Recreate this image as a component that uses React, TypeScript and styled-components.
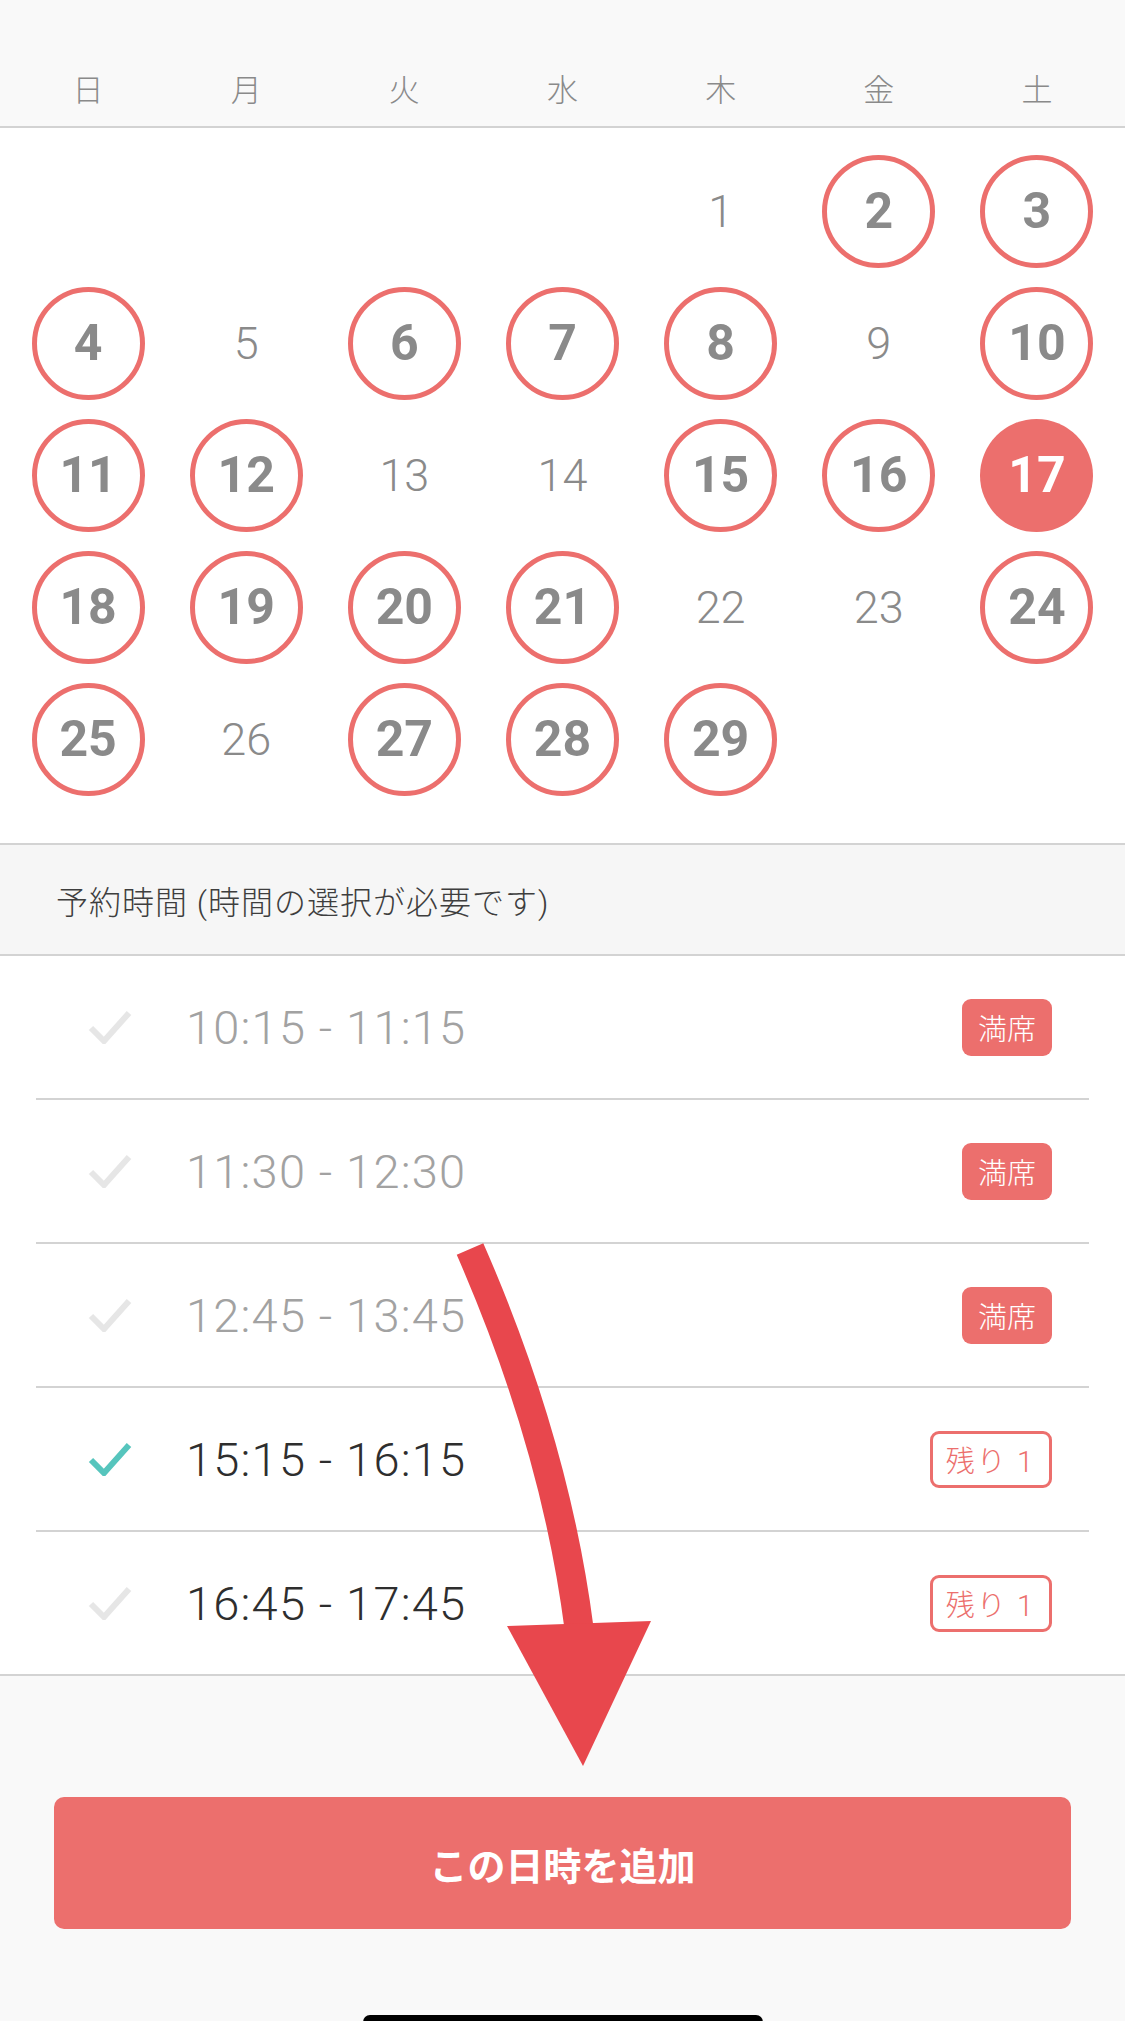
import React from "react";
import styled, { createGlobalStyle, css } from "styled-components";

const GlobalStyle = createGlobalStyle`
  html, body { margin: 0; padding: 0; background: #f9f9f9; }
  body { font-family: Roboto, "Noto Sans CJK JP", sans-serif; overflow-x: hidden; }
  * { box-sizing: border-box; }
`;

const CORAL = "#ec6f6d";
const CJK = `Roboto, "Noto Sans CJK JP", sans-serif`;

const Page = styled.div`
  position: relative;
  width: 1125px;
  min-height: 2021px;
  background: #f9f9f9;
  overflow: hidden;
`;

const WeekHeader = styled.div`
  height: 128px;
  display: grid;
  grid-template-columns: repeat(7, 1fr);
  align-items: end;
  padding: 0 9px 20px;
  background: #f9f9f9;
  border-bottom: 2px solid #d3d3d3;
`;

const WeekDay = styled.div`
  text-align: center;
  font-family: ${CJK};
  font-size: 31px;
  line-height: 31px;
  font-weight: 300;
  color: #8a8a8a;
`;

const CalendarGrid = styled.div`
  display: grid;
  grid-template-columns: repeat(7, 1fr);
  grid-auto-rows: 132px;
  padding: 17px 9px 38px;
  background: #fff;
  border-bottom: 2px solid #d3d3d3;
`;

const DayCell = styled.div`
  display: flex;
  align-items: center;
  justify-content: center;
`;

const DayMark = styled.div<{ $state: "none" | "open" | "selected" }>`
  width: 113px;
  height: 113px;
  border-radius: 50%;
  display: flex;
  align-items: center;
  justify-content: center;
  font-family: Roboto, sans-serif;
  color: #8a8a8a;
  ${(p) =>
    p.$state === "none"
      ? css`
          font-size: 45px;
          font-weight: 300;
        `
      : p.$state === "open"
      ? css`
          font-size: 50px;
          font-weight: 700;
          border: 5px solid ${CORAL};
        `
      : css`
          font-size: 50px;
          font-weight: 700;
          background: ${CORAL};
          color: #fff;
        `}
`;

const SectionBand = styled.div`
  height: 111px;
  display: flex;
  align-items: center;
  padding-left: 56px;
  background: #f6f6f6;
  border-bottom: 2px solid #d3d3d3;
  font-family: ${CJK};
  font-size: 32px;
  font-weight: 300;
  letter-spacing: 1px;
  color: #3e3e3e;
`;

const TimeList = styled.div`
  background: #fff;
  border-bottom: 2px solid #d3d3d3;
`;

const TimeRow = styled.div<{ $last: boolean }>`
  height: ${(p) => (p.$last ? 142 : 144)}px;
  margin: 0 36px;
  display: flex;
  align-items: center;
  padding: 0 37px 0 52px;
  border-bottom: ${(p) => (p.$last ? "none" : "2px solid #d3d3d3")};
`;

const CheckBox = styled.div`
  width: 44px;
  height: 34px;
  display: flex;
  align-items: center;
`;

const TimeText = styled.div<{ $full: boolean }>`
  margin-left: 54px;
  flex: 1;
  font-family: Roboto, sans-serif;
  font-weight: 300;
  font-size: 47px;
  letter-spacing: 1.2px;
  color: ${(p) => (p.$full ? "#a2a2a2" : "#2e2e2e")};
`;

const Badge = styled.div<{ $full: boolean }>`
  height: 57px;
  display: flex;
  align-items: center;
  justify-content: center;
  border-radius: 9px;
  font-family: ${CJK};
  font-size: 29px;
  font-weight: 300;
  ${(p) =>
    p.$full
      ? css`
          padding: 0 16px;
          background: ${CORAL};
          color: #fff;
        `
      : css`
          padding: 0 14px 0 13px;
          border: 3px solid ${CORAL};
          color: ${CORAL};
          letter-spacing: 2px;
        `}
`;

const Footer = styled.div`
  padding: 121px 54px 0;
  display: flex;
  flex-direction: column;
  align-items: center;
  background: #f9f9f9;
`;

const AddButton = styled.button`
  width: 100%;
  height: 132px;
  border: none;
  border-radius: 10px;
  background: ${CORAL};
  color: #fff;
  font-family: ${CJK};
  font-weight: 700;
  font-size: 38px;
`;

const HomeIndicator = styled.div`
  margin-top: 86px;
  width: 400px;
  height: 14px;
  border-radius: 7px;
  background: #000;
`;

const Overlay = styled.svg`
  position: absolute;
  top: 0;
  left: 0;
  pointer-events: none;
`;

const weekDays = ["日", "月", "火", "水", "木", "金", "土"];

type DayState = "none" | "open" | "selected";
const noneDays = new Set([1, 5, 9, 13, 14, 22, 23, 26]);
const days: (null | { n: number; s: DayState })[] = [
  null,
  null,
  null,
  null,
  ...Array.from({ length: 29 }, (_, i) => {
    const n = i + 1;
    const s: DayState = n === 17 ? "selected" : noneDays.has(n) ? "none" : "open";
    return { n, s };
  }),
];

const slots = [
  { t: "10:15 - 11:15", full: true, checked: false },
  { t: "11:30 - 12:30", full: true, checked: false },
  { t: "12:45 - 13:45", full: true, checked: false },
  { t: "15:15 - 16:15", full: false, checked: true },
  { t: "16:45 - 17:45", full: false, checked: false },
];

const CheckIcon = ({ on }: { on: boolean }) => (
  <svg width="44" height="34" viewBox="0 0 44 34">
    <path
      d="M3 18 L16 31 L41 3"
      fill="none"
      stroke={on ? "#56c5bd" : "#e6e6e6"}
      strokeWidth="6"
      strokeLinejoin="miter"
    />
  </svg>
);

export default function App() {
  return (
    <>
      <GlobalStyle />
      <Page>
        <WeekHeader>
          {weekDays.map((d) => (
            <WeekDay key={d}>{d}</WeekDay>
          ))}
        </WeekHeader>
        <CalendarGrid>
          {days.map((d, i) => (
            <DayCell key={i}>{d && <DayMark $state={d.s}>{d.n}</DayMark>}</DayCell>
          ))}
        </CalendarGrid>
        <SectionBand>予約時間 (時間の選択が必要です)</SectionBand>
        <TimeList>
          {slots.map((s, i) => (
            <TimeRow key={s.t} $last={i === slots.length - 1}>
              <CheckBox>
                <CheckIcon on={s.checked} />
              </CheckBox>
              <TimeText $full={s.full}>{s.t}</TimeText>
              <Badge $full={s.full}>{s.full ? "満席" : "残り 1"}</Badge>
            </TimeRow>
          ))}
        </TimeList>
        <Footer>
          <AddButton>この日時を追加</AddButton>
          <HomeIndicator />
        </Footer>
        <Overlay width="1125" height="2021" viewBox="0 0 1125 2021">
          <path d="M470 1249 Q555 1443 579 1628" fill="none" stroke="#e8474d" strokeWidth="29" />
          <polygon points="507,1626 651,1621 583,1766" fill="#e8474d" />
        </Overlay>
      </Page>
    </>
  );
}
